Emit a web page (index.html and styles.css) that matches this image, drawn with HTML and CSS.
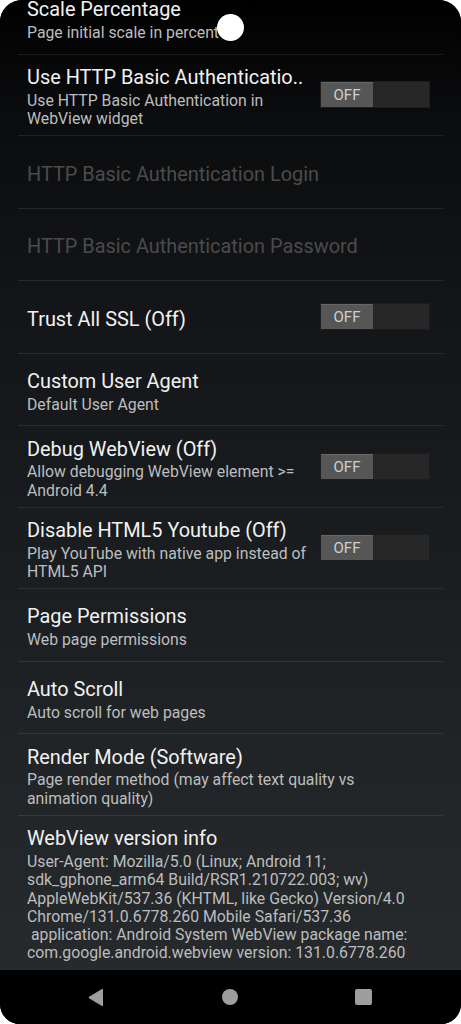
FILE: index.html
```html
<!DOCTYPE html>
<html>
<head>
<meta charset="utf-8">
<link rel="stylesheet" href="styles.css">
</head>
<body>
<div class="phone">
  <div class="content">
    <ul class="prefs">
      <li class="pref">
        <div class="text">
          <div class="title">Scale Percentage</div>
          <div class="summary">Page initial scale in percent</div>
        </div>
      </li>
      <li class="pref">
        <div class="text narrow">
          <div class="title">Use HTTP Basic Authenticatio..</div>
          <div class="summary">Use HTTP Basic Authentication in WebView widget</div>
        </div>
        <div class="switch"><span class="thumb">OFF</span></div>
      </li>
      <li class="pref">
        <div class="text">
          <div class="title disabled">HTTP Basic Authentication Login</div>
        </div>
      </li>
      <li class="pref">
        <div class="text">
          <div class="title disabled">HTTP Basic Authentication Password</div>
        </div>
      </li>
      <li class="pref">
        <div class="text narrow">
          <div class="title">Trust All SSL (Off)</div>
        </div>
        <div class="switch"><span class="thumb">OFF</span></div>
      </li>
      <li class="pref">
        <div class="text">
          <div class="title">Custom User Agent</div>
          <div class="summary">Default User Agent</div>
        </div>
      </li>
      <li class="pref">
        <div class="text narrow">
          <div class="title">Debug WebView (Off)</div>
          <div class="summary">Allow debugging WebView element &gt;= Android 4.4</div>
        </div>
        <div class="switch"><span class="thumb">OFF</span></div>
      </li>
      <li class="pref">
        <div class="text narrow">
          <div class="title">Disable HTML5 Youtube (Off)</div>
          <div class="summary">Play YouTube with native app instead of HTML5 API</div>
        </div>
        <div class="switch"><span class="thumb">OFF</span></div>
      </li>
      <li class="pref">
        <div class="text">
          <div class="title">Page Permissions</div>
          <div class="summary">Web page permissions</div>
        </div>
      </li>
      <li class="pref">
        <div class="text">
          <div class="title">Auto Scroll</div>
          <div class="summary">Auto scroll for web pages</div>
        </div>
      </li>
      <li class="pref">
        <div class="text">
          <div class="title">Render Mode (Software)</div>
          <div class="summary">Page render method (may affect text quality vs animation quality)</div>
        </div>
      </li>
      <li class="pref last">
        <div class="text">
          <div class="title">WebView version info</div>
          <div class="summary">User-Agent: Mozilla/5.0 (Linux; Android 11; sdk_gphone_arm64 Build/RSR1.210722.003; wv) AppleWebKit/537.36 (KHTML, like Gecko) Version/4.0 Chrome/131.0.6778.260 Mobile Safari/537.36<br>&nbsp;application: Android System WebView package name: com.google.android.webview version: 131.0.6778.260</div>
        </div>
      </li>
    </ul>
  </div>
  <div class="nav">
    <svg class="nav-icon" width="18" height="19" viewBox="0 0 18 19"><path d="M16 1.5 L16 17.5 Q16 18.5 15 18 L2 10.3 Q1.2 9.5 2 8.7 L15 1 Q16 0.5 16 1.5 Z" fill="#9e9e9e"/></svg>
    <span class="home"></span>
    <span class="recents"></span>
  </div>
  <span class="touch"></span>
</div>
</body>
</html>
```
FILE: styles.css
```css
* { box-sizing: border-box; }
html, body { margin: 0; padding: 0; background: #ffffff; }
body { font-family: Roboto, "Noto Sans", "Liberation Sans", sans-serif; }

.phone {
  position: relative;
  width: 461px;
  height: 1024px;
  background: #000;
  border-radius: 22px 22px 20px 20px;
  overflow: hidden;
  display: flex;
  flex-direction: column;
}

.content {
  flex: 1;
  overflow: hidden;
  background: linear-gradient(180deg, #000000 0%, #0b0c0e 12%, #131518 32%, #1b1e21 60%, #212528 80%, #272a2d 100%);
}

.prefs {
  list-style: none;
  margin: -18px 18px 0;
  padding: 0;
}

.pref {
  display: flex;
  align-items: center;
  min-height: 72.5px;
  border-bottom: 1px solid rgba(255, 255, 255, 0.09);
  padding: 0 13px 0 9px;
}
.pref.last { border-bottom: none; }

.text {
  flex: 1;
  min-width: 0;
  padding: 11.5px 10px 6.5px 0;
}

.title {
  font-size: 19.9px;
  color: #f1f1f1;
  line-height: 23.4px;
  white-space: nowrap;
}
.title.disabled { color: #4b4b4b; }

.summary {
  margin-top: 2.5px;
  font-size: 15.8px;
  line-height: 18.3px;
  color: #bdbdbd;
}

.switch {
  flex: none;
  width: 110px;
  height: 27px;
  background: #272727;
  border: 1px solid #1d1d1d;
  display: flex;
  align-items: stretch;
}
.thumb {
  width: 52px;
  background: #565656;
  border-top: 1px solid #666;
  color: #cfcfcf;
  font-size: 15px;
  display: flex;
  align-items: center;
  justify-content: center;
}

.nav {
  height: 54px;
  flex: none;
  background: #000;
  display: flex;
  align-items: center;
  padding: 0 0 0 87px;
}
.nav-icon { display: block; }
.home {
  width: 16px;
  height: 16px;
  border-radius: 50%;
  background: #9e9e9e;
  margin-left: 117px;
}
.recents {
  width: 17px;
  height: 16px;
  border-radius: 2px;
  background: #9e9e9e;
  margin-left: 117px;
}

.touch {
  position: absolute;
  left: 217px;
  top: 14px;
  width: 27px;
  height: 27px;
  border-radius: 50%;
  background: #ffffff;
}
```
